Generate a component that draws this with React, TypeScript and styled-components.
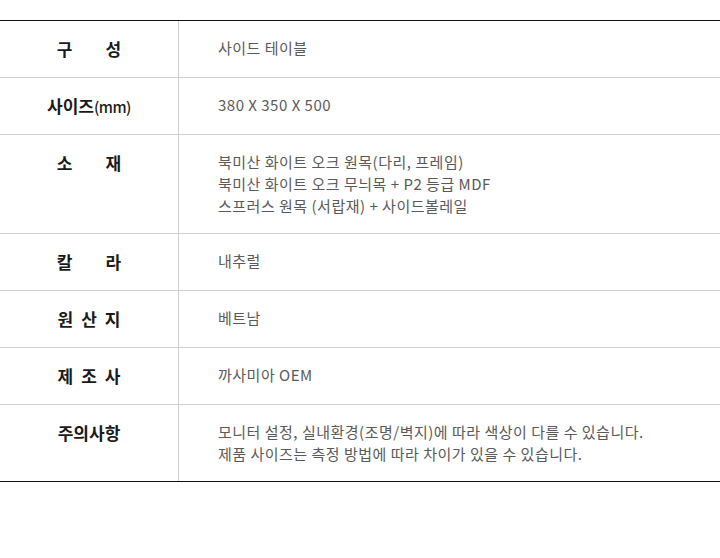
import React from "react";
import styled, { createGlobalStyle } from "styled-components";

const GlobalStyle = createGlobalStyle`
  html, body {
    margin: 0;
    padding: 0;
    background: #fff;
  }
  body {
    font-family: "Noto Sans CJK KR", "Noto Sans", sans-serif;
  }
`;

const Page = styled.div`
  width: 720px;
  height: 558px;
  padding-top: 20px;
  box-sizing: border-box;
`;

const SpecTable = styled.div`
  border-top: 1px solid #111;
  border-bottom: 1px solid #111;
`;

const SpecRow = styled.div`
  display: grid;
  grid-template-columns: 179px 1fr;

  & + & {
    border-top: 1px solid #cfcfcf;
  }
`;

const LabelCell = styled.div`
  display: flex;
  justify-content: center;
  padding: 16px 0;
  border-right: 1px solid #cfcfcf;
`;

const Label = styled.span<{ $spaced?: boolean }>`
  font-size: 17px;
  line-height: 24px;
  height: 24px;
  font-weight: 700;
  color: #1a1a1a;
  letter-spacing: ${(p) => (p.$spaced ? "8px" : "0")};
  margin-right: ${(p) => (p.$spaced ? "-8px" : "0")};
  white-space: pre;
`;

const Unit = styled.span`
  font-size: 15px;
  line-height: 1;
  font-weight: 500;
  letter-spacing: -0.5px;
`;

const ValueCell = styled.div`
  padding: 16px 0 16px 39px;
`;

const ValueLine = styled.div`
  font-size: 15px;
  line-height: 22px;
  letter-spacing: 0.5px;
  color: #5a5a5a;
`;

type Row = {
  label: React.ReactNode;
  key: string;
  spaced?: boolean;
  lines: string[];
};

const rows: Row[] = [
  { key: "comp", label: "구\u3000성", spaced: true, lines: ["사이드 테이블"] },
  {
    key: "size",
    label: (
      <>
        사이즈<Unit>(mm)</Unit>
      </>
    ),
    lines: ["380 X 350 X 500"],
  },
  {
    key: "material",
    label: "소\u3000재",
    spaced: true,
    lines: [
      "북미산 화이트 오크 원목(다리, 프레임)",
      "북미산 화이트 오크 무늬목 + P2 등급 MDF",
      "스프러스 원목 (서랍재) + 사이드볼레일",
    ],
  },
  { key: "color", label: "칼\u3000라", spaced: true, lines: ["내추럴"] },
  { key: "origin", label: "원산지", spaced: true, lines: ["베트남"] },
  { key: "maker", label: "제조사", spaced: true, lines: ["까사미아 OEM"] },
  {
    key: "notice",
    label: "주의사항",
    lines: [
      "모니터 설정, 실내환경(조명/벽지)에 따라 색상이 다를 수 있습니다.",
      "제품 사이즈는 측정 방법에 따라 차이가 있을 수 있습니다.",
    ],
  },
];

const App = () => {
  return (
    <Page>
      <GlobalStyle />
      <SpecTable>
        {rows.map((row) => (
          <SpecRow key={row.key}>
            <LabelCell>
              <Label $spaced={row.spaced}>{row.label}</Label>
            </LabelCell>
            <ValueCell>
              {row.lines.map((line) => (
                <ValueLine key={line}>{line}</ValueLine>
              ))}
            </ValueCell>
          </SpecRow>
        ))}
      </SpecTable>
    </Page>
  );
};

export default App;
